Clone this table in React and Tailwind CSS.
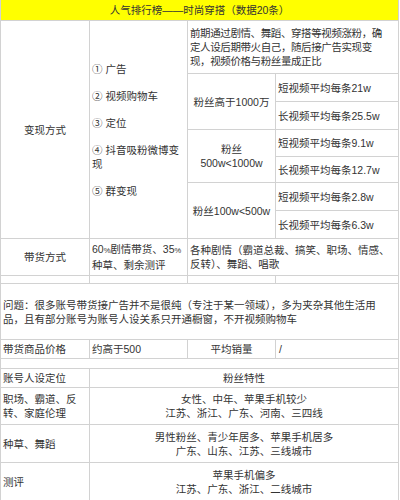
const cell = "bg-white flex items-center";

export default function App() {
  return (
    <div
      className="w-[400px] h-[500px] overflow-hidden bg-white text-[#333] text-[10.5px] leading-[14px]"
      style={{ fontFamily: '"Liberation Sans", "Noto Sans CJK SC", sans-serif' }}
    >
      <div className="grid grid-cols-[88px_97px_87px_122px] grid-rows-[20px_52px_27px_27px_26px_25px_27px_27px_36px_7px_55px_18px_9px_18px_36px_37px_37px] gap-px bg-[#d2d2d2] pl-px pr-px w-[399px]">
        {/* title */}
        <div className="col-start-1 col-span-4 row-start-1 bg-[#ffff00] flex items-center justify-center">
          人气排行榜——时尚穿搭（数据20条）
        </div>

        {/* 变现方式 block */}
        <div className={`${cell} col-start-1 row-start-2 row-span-7 justify-center`}>变现方式</div>
        <div className={`${cell} col-start-2 row-start-2 row-span-7 pl-[2px] pr-[4px]`}>
          <div className="flex flex-col gap-[13px]">
            <p>① 广告</p>
            <p>② 视频购物车</p>
            <p>③ 定位</p>
            <p>
              ④ 抖音吸粉微博变
              <br />现
            </p>
            <p>⑤ 群变现</p>
          </div>
        </div>
        <div className={`${cell} col-start-3 col-span-2 row-start-2 pl-[2px] tracking-[-0.4px] whitespace-nowrap`}>
          <p>
            前期通过剧情、舞蹈、穿搭等视频涨粉，确
            <br />
            定人设后期带火自己，随后接广告实现变
            <br />
            现，视频价格与粉丝量成正比
          </p>
        </div>

        <div className={`${cell} col-start-3 row-start-3 row-span-2 justify-center`}>粉丝高于1000万</div>
        <div className={`${cell} col-start-4 row-start-3 pl-[2px]`}>短视频平均每条21w</div>
        <div className={`${cell} col-start-4 row-start-4 pl-[2px]`}>长视频平均每条25.5w</div>

        <div className={`${cell} col-start-3 row-start-5 row-span-2 justify-center text-center`}>
          粉丝
          <br />
          500w&lt;1000w
        </div>
        <div className={`${cell} col-start-4 row-start-5 pl-[2px]`}>短视频平均每条9.1w</div>
        <div className={`${cell} col-start-4 row-start-6 pl-[2px]`}>长视频平均每条12.7w</div>

        <div className={`${cell} col-start-3 row-start-7 row-span-2 justify-center`}>粉丝100w&lt;500w</div>
        <div className={`${cell} col-start-4 row-start-7 pl-[2px]`}>短视频平均每条2.8w</div>
        <div className={`${cell} col-start-4 row-start-8 pl-[2px]`}>长视频平均每条6.3w</div>

        {/* 带货方式 */}
        <div className={`${cell} col-start-1 row-start-9 justify-center`}>带货方式</div>
        <div className={`${cell} col-start-2 row-start-9 pl-[2px] whitespace-nowrap`}>
          <p>
            60<span className="text-[7.5px]">%</span>剧情带货、35<span className="text-[7.5px]">%</span>
            <br />
            种草、剩余测评
          </p>
        </div>
        <div className={`${cell} col-start-3 col-span-2 row-start-9 pl-[2px] pr-[3px]`}>
          各种剧情（霸道总裁、搞笑、职场、情感、反转）、舞蹈、唱歌
        </div>

        <div className="bg-white col-start-1 row-start-10" />
        <div className="bg-white col-start-2 row-start-10" />
        <div className="bg-white col-start-3 row-start-10" />
        <div className="bg-white col-start-4 row-start-10" />

        {/* 问题 */}
        <div className={`${cell} col-start-1 col-span-4 row-start-11 pl-[2px] pr-[4px]`}>
          问题：很多账号带货接广告并不是很纯（专注于某一领域），多为夹杂其他生活用品，且有部分账号为账号人设关系只开通橱窗，不开视频购物车
        </div>

        {/* 价格 */}
        <div className={`${cell} col-start-1 row-start-12 pl-[2px]`}>带货商品价格</div>
        <div className={`${cell} col-start-2 row-start-12 pl-[2px]`}>约高于500</div>
        <div className={`${cell} col-start-3 row-start-12 justify-center`}>平均销量</div>
        <div className={`${cell} col-start-4 row-start-12 pl-[3px]`}>/</div>

        <div className="bg-white col-start-1 col-span-4 row-start-13" />

        {/* 人设 */}
        <div className={`${cell} col-start-1 row-start-14 pl-[2px]`}>账号人设定位</div>
        <div className={`${cell} col-start-2 col-span-3 row-start-14 justify-center`}>粉丝特性</div>

        <div className={`${cell} col-start-1 row-start-15 pl-[2px] pr-[6px]`}>职场、霸道、反转、家庭伦理</div>
        <div className={`${cell} col-start-2 col-span-3 row-start-15 justify-center text-center`}>
          女性、中年、苹果手机较少
          <br />
          江苏、浙江、广东、河南、三四线
        </div>

        <div className={`${cell} col-start-1 row-start-16 pl-[2px]`}>种草、舞蹈</div>
        <div className={`${cell} col-start-2 col-span-3 row-start-16 justify-center text-center`}>
          男性粉丝、青少年居多、苹果手机居多
          <br />
          广东、山东、江苏、三线城市
        </div>

        <div className={`${cell} col-start-1 row-start-17 pl-[2px]`}>测评</div>
        <div className={`${cell} col-start-2 col-span-3 row-start-17 justify-center text-center`}>
          苹果手机偏多
          <br />
          江苏、广东、浙江、二线城市
        </div>
      </div>
    </div>
  );
}
